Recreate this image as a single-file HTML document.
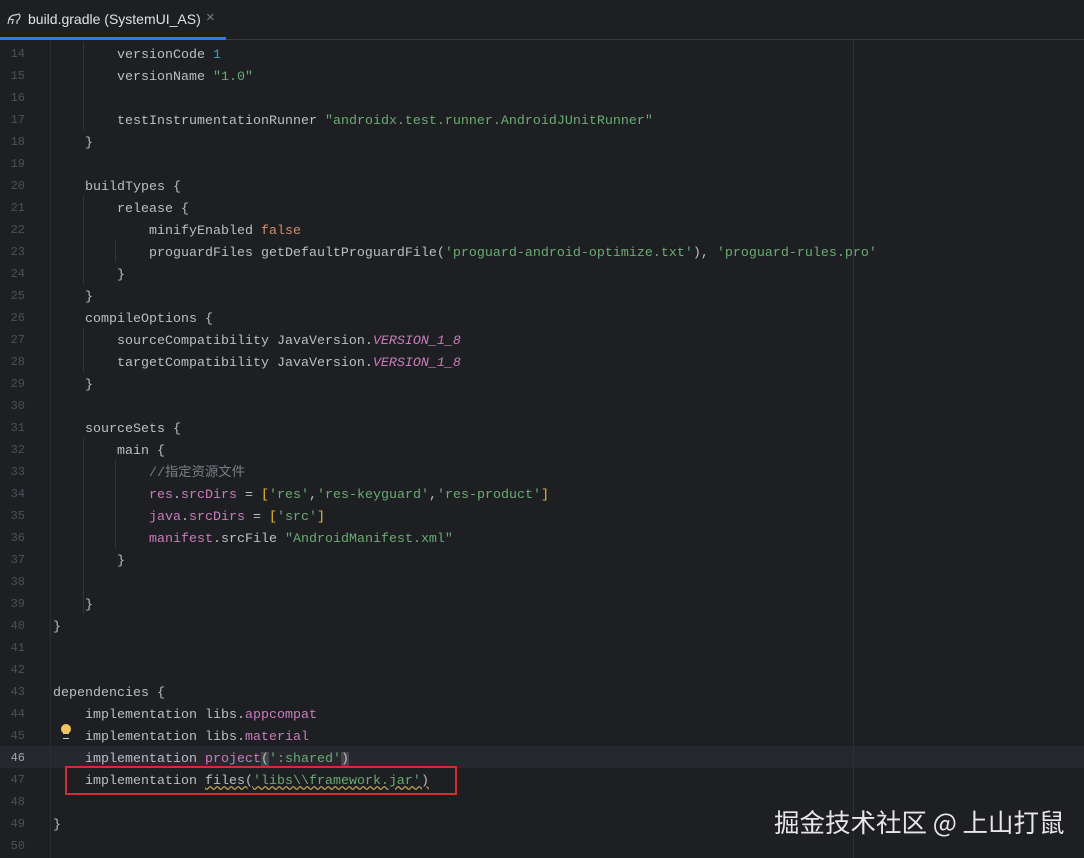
<!DOCTYPE html>
<html><head><meta charset="utf-8"><style>
body{margin:0;width:1084px;height:858px;background:#1e1f22;overflow:hidden;position:relative;font-family:"Liberation Mono","Noto Sans CJK SC",monospace;}
.tab{position:absolute;left:0;top:0;width:1084px;height:39px;border-bottom:1px solid #393b40;background:#1e1f22;}
.tabt{position:absolute;left:28px;top:11px;font:14px "Liberation Sans",sans-serif;color:#dfe1e5;}
.tabx{position:absolute;left:206px;top:9px;font:15px "Liberation Sans",sans-serif;color:#7a7e85;}
.uline{position:absolute;left:0;top:37px;width:226px;height:3px;background:#3574f0;}
.gsep{position:absolute;left:50px;top:40px;width:1px;height:818px;background:#2b2d30;}
.margin{position:absolute;left:853px;top:40px;width:1px;height:818px;background:#2e3034;}
.hl{position:absolute;left:0;top:746px;width:1084px;height:22px;background:#26282e;}
.ig{position:absolute;width:1px;background:#313438;}
.ln{position:absolute;left:0;width:25px;text-align:right;font-size:12px;color:#4b5059;line-height:22px;}
.row{position:absolute;left:53px;white-space:pre;font-size:13.33px;line-height:22px;color:#bcbec4;}
.n{color:#2aacb8}.s{color:#6aab73}.k{color:#cf8e6d}.p{color:#c77dbb}.i{color:#c77dbb;font-style:italic}.c{color:#7a7e85}.b{color:#e8ba36}
.box{position:absolute;left:65px;top:766px;width:392px;height:29px;border:2px solid #d52b32;box-sizing:border-box;}
.wm{position:absolute;left:774px;top:803px;font:25.5px "Noto Sans CJK SC",sans-serif;color:#e6e6e6;}
.bulb{position:absolute;left:61px;top:724px;width:10px;height:10px;border-radius:50%;background:#f2c55c;}
.bulb2{position:absolute;left:63px;top:733px;width:6px;height:4px;border-top:1px solid #ccc;border-bottom:1px solid #ccc;}
</style></head><body>
<div class="tab"><svg style="position:absolute;left:6px;top:12px" width="16" height="14" viewBox="0 0 16 14"><path d="M2 12 L3 7 Q5 3 9 3 L13 2 Q15 4 13 7 L11 9 L11 12 M6 12 L7 9 M3 7 L8 8" fill="none" stroke="#ced0d6" stroke-width="1.2"/></svg><span class="tabt">build.gradle (SystemUI_AS)</span><span class="tabx">×</span></div>
<div class="uline"></div>
<div class="hl"></div>
<div class="gsep"></div>
<div class="margin"></div>
<div class="ig" style="left:83px;top:196px;height:88px"></div>
<div class="ig" style="left:115px;top:240px;height:22px"></div>
<div class="ig" style="left:83px;top:328px;height:44px"></div>
<div class="ig" style="left:83px;top:438px;height:176px"></div>
<div class="ig" style="left:115px;top:460px;height:88px"></div>
<div class="ig" style="left:83px;top:42px;height:88px"></div>
<div id="c"></div>
<div class="bulb"></div><div class="bulb2"></div>
<div class="box"></div>
<div class="wm">掘金技术社区 @ 上山打鼠</div>
<script>
var L=[
'        versionCode <span class="n">1</span>',
'        versionName <span class="s">"1.0"</span>',
'',
'        testInstrumentationRunner <span class="s">"androidx.test.runner.AndroidJUnitRunner"</span>',
'    }',
'',
'    buildTypes {',
'        release {',
'            minifyEnabled <span class="k">false</span>',
'            proguardFiles getDefaultProguardFile(<span class="s">\'proguard-android-optimize.txt\'</span>), <span class="s">\'proguard-rules.pro\'</span>',
'        }',
'    }',
'    compileOptions {',
'        sourceCompatibility JavaVersion.<span class="i">VERSION_1_8</span>',
'        targetCompatibility JavaVersion.<span class="i">VERSION_1_8</span>',
'    }',
'',
'    sourceSets {',
'        main {',
'            <span class="c">//指定资源文件</span>',
'            <span class="p">res</span>.<span class="p">srcDirs</span> = <span class="b">[</span><span class="s">\'res\'</span>,<span class="s">\'res-keyguard\'</span>,<span class="s">\'res-product\'</span><span class="b">]</span>',
'            <span class="p">java</span>.<span class="p">srcDirs</span> = <span class="b">[</span><span class="s">\'src\'</span><span class="b">]</span>',
'            <span class="p">manifest</span>.srcFile <span class="s">"AndroidManifest.xml"</span>',
'        }',
'',
'    }',
'}',
'',
'',
'dependencies {',
'    implementation libs.<span class="p">appcompat</span>',
'    implementation libs.<span class="p">material</span>',
'    implementation <span class="p">project</span><span style="background:#43454a">(</span><span class="s">\':shared\'</span><span style="background:#43454a">)</span>',
'    implementation <span style="text-decoration:underline wavy #b39f4b">files(<span class="s">\'libs\\\\framework.jar\'</span>)</span>',
'',
'}',
''];
var h='';
for(var j=0;j<L.length;j++){var t=42+j*22;var n=14+j;
h+='<div class="ln" style="top:'+(t+1)+'px;'+(n==46?'color:#a1a3ab':'')+'">'+n+'</div><div class="row" style="top:'+(t+3)+'px">'+L[j]+'</div>';}
document.getElementById('c').innerHTML=h;
</script>
</body></html>
